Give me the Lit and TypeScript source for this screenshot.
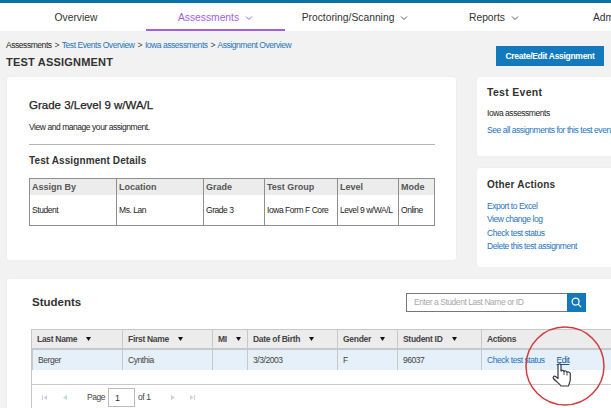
import { LitElement, html, css, svg } from 'lit';
import { customElement } from 'lit/decorators.js';

const DETAIL_COLS = ['Assign By', 'Location', 'Grade', 'Test Group', 'Level', 'Mode'];
const DETAIL_ROW = ['Student', 'Ms. Lan', 'Grade 3', 'Iowa Form F Core', 'Level 9 w/WA/L', 'Online'];
const STUDENT_COLS = [
  { label: 'Last Name', sort: true },
  { label: 'First Name', sort: true },
  { label: 'MI', sort: true },
  { label: 'Date of Birth', sort: true },
  { label: 'Gender', sort: true },
  { label: 'Student ID', sort: true },
  { label: 'Actions', sort: false },
];
const STUDENT_ROW = ['Berger', 'Cynthia', '', '3/3/2003', 'F', '96037'];

const chevron = svg`<path d="M1 1.5 L4 4.5 L7 1.5" fill="none" stroke="currentColor" stroke-width="1"/>`;

@customElement('app-root')
export class AppRoot extends LitElement {
  static styles = css`
    :host {
      display: block;
      position: relative;
      width: 611px;
      height: 408px;
      overflow: hidden;
      background: #f2f2f2;
      font-family: 'Liberation Sans', Arial, sans-serif;
      font-size: 8.5px;
      letter-spacing: -0.45px;
      color: #222;
    }
    a { color: #1f74bd; text-decoration: none; }

    .nav {
      display: grid;
      grid-template-columns: 146px 139px 140px 138px 100px;
      width: 663px;
      height: 28px;
      border-top: 3px solid #0b6fa8;
      background: #fff;
      font-size: 10.3px;
      letter-spacing: 0;
      color: #333;
    }
    .nav-item {
      display: flex;
      align-items: center;
      justify-content: center;
      gap: 6px;
      padding-top: 1px;
      box-sizing: border-box;
      height: 28px;
    }
    .nav-item svg { width: 8px; height: 6px; color: #555; }
    .nav-item.active {
      color: #a45ee5;
      box-shadow: inset 0 -2px 0 #a45ee5;
    }
    .nav-item.active svg { color: #a45ee5; }
    .nav-item.overview { padding-left: 6px; }
    .nav-item.admin { justify-content: flex-start; padding-left: 30px; }

    .head {
      display: flex;
      justify-content: space-between;
      padding: 9px 7px 11px 6px;
      height: 46px;
      box-sizing: border-box;
    }
    .crumbs { white-space: nowrap; line-height: 11px; }
    .crumbs .sep { color: #444; margin: 0 1px; }
    h1 {
      margin: 4px 0 0;
      font-size: 11px;
      line-height: 14px;
      font-weight: 700;
      color: #333;
      letter-spacing: 0.2px;
    }
    .create {
      align-self: flex-start;
      margin-top: 6px;
      width: 108px;
      height: 20px;
      background: #1279bd;
      color: #fff;
      font-weight: 700;
      letter-spacing: -0.3px;
      display: flex;
      align-items: center;
      justify-content: center;
    }

    .main {
      display: grid;
      grid-template-columns: 449px 160px;
      column-gap: 21px;
      padding-left: 7px;
      width: 700px;
    }
    .card {
      background: #fff;
      border-radius: 2px;
      box-shadow: 0 0 1px rgba(0, 0, 0, 0.12);
      box-sizing: border-box;
    }
    .summary {
      height: 183px;
      padding: 21px 21px 0 22px;
    }
    .summary h2 {
      margin: 0;
      font-size: 11.5px;
      line-height: 14px;
      font-weight: 400;
      letter-spacing: 0;
      color: #222;
      -webkit-text-stroke: 0.25px #222;
    }
    .summary p { margin: 10px 0 0; line-height: 10px; }
    .summary hr { border: 0; border-top: 1px solid #b5b5b5; margin: 12px 0 0; }
    .summary h3 {
      margin: 10px 0 0;
      font-size: 10px;
      line-height: 12px;
      font-weight: 700;
      letter-spacing: 0.1px;
      color: #333;
    }
    .details {
      display: grid;
      grid-template-columns: 86px 87px 61px 73px 61px 36px;
      margin-top: 11px;
      border: 1px solid #8f8f8f;
      width: 406px;
      box-sizing: border-box;
    }
    .details > div { border-left: 1px solid #8f8f8f; padding-left: 2px; }
    .details > div:nth-child(6n + 1) { border-left: 0; }
    .details .th {
      height: 16px;
      line-height: 16px;
      background: #ececec;
      font-size: 9px;
      font-weight: 700;
      letter-spacing: 0;
      color: #555;
    }
    .details .td { height: 30px; line-height: 30px; white-space: nowrap; }

    .side { display: flex; flex-direction: column; gap: 12px; }
    .side .card { padding: 0 10px; }
    .event { height: 79px; padding-top: 1px !important; }
    .other { height: 99px; }
    .side h3 {
      margin: 0;
      font-size: 10px;
      font-weight: 700;
      letter-spacing: 0.2px;
      color: #333;
      line-height: 12px;
    }
    .event h3 { margin-top: 8px; font-size: 10.5px; letter-spacing: 0.3px; }
    .other h3 { margin-top: 11px; }
    .event .name { margin-top: 10px; line-height: 11px; }
    .event a { display: block; margin-top: 6px; line-height: 11px; white-space: nowrap; }
    .links { display: flex; flex-direction: column; margin-top: 9px; }
    .links a { line-height: 13.4px; }

    .students {
      margin: 12px 0 0 7px;
      width: 660px;
      height: 140px;
      padding: 11px 0 0 24px;
    }
    .bar { display: flex; justify-content: space-between; align-items: flex-start; height: 22px; }
    .bar h2 {
      margin: 6px 0 0 1px;
      font-size: 11.5px;
      line-height: 13px;
      font-weight: 700;
      letter-spacing: 0;
      color: #333;
    }
    .search { display: flex; width: 180px; height: 19px; margin: 3px 81px 0 0; box-sizing: border-box; }
    .search .input {
      flex: 1;
      border: 1px solid #777;
      border-right: 0;
      background: #fff;
      color: #a8a8a8;
      line-height: 17px;
      padding-left: 7px;
    }
    .search .go {
      width: 19px;
      background: #1279bd;
      display: flex;
      align-items: center;
      justify-content: center;
    }
    .search .go svg { width: 11px; height: 11px; }

    .grid {
      margin-top: 17px;
      border-left: 1px solid #c8c8c8;
      border-top: 1px solid #c8c8c8;
      height: 88px;
    }
    .cols {
      display: grid;
      grid-template-columns: 90px 90px 35px 90px 60px 84px 140px;
    }
    .hd {
      height: 18px;
      background: #ececec;
      border-bottom: 2px solid #c8c8c8;
      border-left: 1px solid #c8c8c8;
      padding-left: 5px;
      display: flex;
      align-items: center;
      justify-content: flex-start;
      font-weight: 700;
      letter-spacing: -0.3px;
      color: #444;
      white-space: nowrap;
    }
    .hd:first-child { border-left: 0; }
    .hd .tri { margin-left: 9px; width: 5px; height: 4px; fill: #111; flex: none; }
    .cell {
      height: 20px;
      line-height: 20px;
      background: #e6f0fa;
      border-left: 1px solid #c8c8c8;
      padding-left: 5px;
      color: #444;
      white-space: nowrap;
    }
    .cell:first-child { border-left: 0; }
    .cell a + a { margin-left: 12px; text-decoration: underline; color: #135a92; }
    .spacer { height: 14px; border-bottom: 1px solid #c8c8c8; }
    .pager {
      display: flex;
      align-items: center;
      height: 24px;
      color: #444;
      padding-left: 10px;
    }
    .pager svg { width: 5px; height: 5px; fill: #c6d6e6; flex: none; }
    .pager .first { margin-right: 15px; }
    .pager .prev { margin-right: 20px; }
    .pager .box {
      width: 27px;
      height: 19px;
      margin: 0 3px;
      border: 1px solid #bbb;
      box-sizing: border-box;
      background: #fff;
      line-height: 18px;
      padding-left: 6px;
      color: #333;
      font-size: 9px;
    }
    .pager .next { margin-left: 21px; margin-right: 14px; }

    .ring {
      position: absolute;
      left: 525px;
      top: 325px;
      width: 80px;
      height: 82px;
      pointer-events: none;
    }
    .hand {
      position: absolute;
      left: 552px;
      top: 363px;
      width: 20px;
      height: 24px;
      pointer-events: none;
    }
  `;

  private tri() {
    return html`<svg class="tri" viewBox="0 0 5 4"><path d="M0 0 H5 L2.5 4 Z"/></svg>`;
  }

  render() {
    return html`
      <div class="nav">
        <div class="nav-item overview">Overview</div>
        <div class="nav-item active">Assessments <svg viewBox="0 0 8 6">${chevron}</svg></div>
        <div class="nav-item">Proctoring/Scanning <svg viewBox="0 0 8 6">${chevron}</svg></div>
        <div class="nav-item">Reports <svg viewBox="0 0 8 6">${chevron}</svg></div>
        <div class="nav-item admin">Admin</div>
      </div>

      <div class="head">
        <div>
          <div class="crumbs">
            <span>Assessments</span> <span class="sep">&gt;</span>
            <a>Test Events Overview</a> <span class="sep">&gt;</span>
            <a>Iowa assessments</a> <span class="sep">&gt;</span>
            <a>Assignment Overview</a>
          </div>
          <h1>TEST ASSIGNMENT</h1>
        </div>
        <div class="create">Create/Edit Assignment</div>
      </div>

      <div class="main">
        <div class="card summary">
          <h2>Grade 3/Level 9 w/WA/L</h2>
          <p>View and manage your assignment.</p>
          <hr />
          <h3>Test Assignment Details</h3>
          <div class="details">
            ${DETAIL_COLS.map((c) => html`<div class="th">${c}</div>`)}
            ${DETAIL_ROW.map((c) => html`<div class="td">${c}</div>`)}
          </div>
        </div>
        <div class="side">
          <div class="card event">
            <h3>Test Event</h3>
            <div class="name">Iowa assessments</div>
            <a>See all assignments for this test event</a>
          </div>
          <div class="card other">
            <h3>Other Actions</h3>
            <div class="links">
              <a>Export to Excel</a>
              <a>View change log</a>
              <a>Check test status</a>
              <a>Delete this test assignment</a>
            </div>
          </div>
        </div>
      </div>

      <div class="card students">
        <div class="bar">
          <h2>Students</h2>
          <div class="search">
            <div class="input">Enter a Student Last Name or ID</div>
            <div class="go">
              <svg viewBox="0 0 12 12" fill="none" stroke="#fff" stroke-width="1.3">
                <circle cx="5" cy="5" r="3.8" />
                <path d="M7.8 7.8 L11 11" />
              </svg>
            </div>
          </div>
        </div>
        <div class="grid">
          <div class="cols">
            ${STUDENT_COLS.map((c) => html`<div class="hd">${c.label}${c.sort ? this.tri() : ''}</div>`)}
            ${STUDENT_ROW.map((c) => html`<div class="cell">${c}</div>`)}
            <div class="cell"><a>Check test status</a><a>Edit</a></div>
          </div>
          <div class="spacer"></div>
          <div class="pager">
            <svg class="first" viewBox="0 0 5 5"><path d="M0 0 H1 V5 H0 Z M5 0 V5 L1.5 2.5 Z"/></svg>
            <svg class="prev" viewBox="0 0 5 5"><path d="M5 0 V5 L1 2.5 Z"/></svg>
            <span>Page</span>
            <div class="box">1</div>
            <span>of 1</span>
            <svg class="next" viewBox="0 0 5 5"><path d="M0 0 V5 L4 2.5 Z"/></svg>
            <svg viewBox="0 0 5 5"><path d="M4 0 H5 V5 H4 Z M0 0 V5 L3.5 2.5 Z"/></svg>
          </div>
        </div>
      </div>

      <svg class="ring" viewBox="0 0 80 82">
        <circle cx="40" cy="41" r="39" fill="none" stroke="#d23b3f" stroke-width="1.5" />
      </svg>
      <svg class="hand" viewBox="0 0 20 24">
        <path
          d="M6 2 C6 0.5 9 0.5 9 2 V8 C9.5 7 11.5 7 12 8.5 C12.5 7.5 14.5 7.8 15 9.3 C15.5 8.5 18 8.8 18.3 10.5 V16 C18.3 19 17 20.5 16.5 23 H9 C7.5 20.5 4 18.5 1.5 15.5 C0.5 14 2 12.5 3.5 13.5 L6 15.5 Z"
          fill="#fff"
          stroke="#33363c"
          stroke-width="1.2"
          stroke-linejoin="round"
        />
        <path d="M12 8.5 V12 M15 9.3 V12.5" fill="none" stroke="#33363c" stroke-width="0.9" />
      </svg>
    `;
  }
}
